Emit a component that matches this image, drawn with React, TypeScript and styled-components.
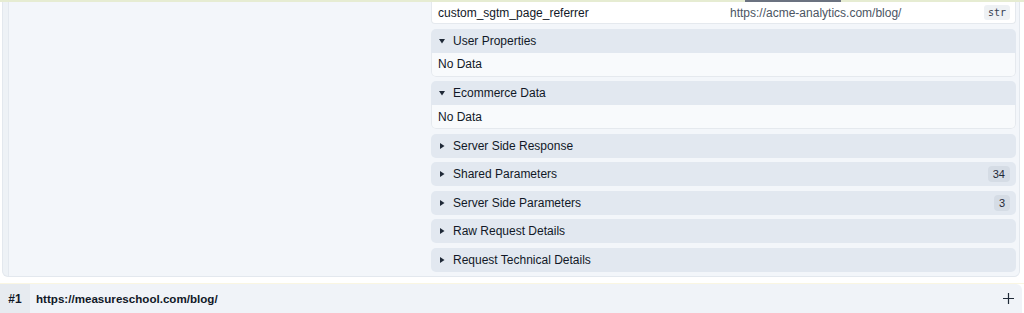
import { FC } from "react";
import styled, { createGlobalStyle } from "styled-components";

const GlobalStyle = createGlobalStyle`
  html, body {
    margin: 0;
    padding: 0;
    background: #ffffff;
    font-family: "Liberation Sans", Arial, Helvetica, sans-serif;
    font-size: 12px;
    color: #1f2937;
  }
`;

const Page = styled.div`
  width: 1024px;
  height: 313px;
  overflow: hidden;
  display: flex;
  flex-direction: column;
`;

const TopLine = styled.div`
  position: relative;
  height: 2px;
  background: #e6ecd2;
  flex-shrink: 0;
`;

const ScrollThumb = styled.div`
  position: absolute;
  left: 745px;
  top: 0;
  width: 96px;
  height: 2px;
  background: #6b7280;
`;

const Panel = styled.div`
  margin: 0 4px 0 2px;
  height: 276px;
  box-sizing: border-box;
  border: 1px solid #e3e8ee;
  border-top: none;
  border-radius: 0 0 6px 6px;
  background: #eef2f6;
  display: grid;
  grid-template-columns: 423px 1fr;
  padding-left: 5px;
  overflow: hidden;
`;

const LeftColumn = styled.div`
  background: #f3f6fa;
  border-left: 1px solid #e4e9ef;
`;

const RightColumn = styled.div`
  background: #f3f6fa;
  display: flex;
  flex-direction: column;
  gap: 4.5px;
  padding: 0 3px 0 0;
`;

const ParamRow = styled.div`
  height: 21px;
  background: #ffffff;
  border: 1px solid #e5e9ee;
  border-top: none;
  border-radius: 0 0 4px 4px;
  display: flex;
  align-items: center;
  padding: 0 5px 0 6px;
`;

const ParamName = styled.span`
  width: 292px;
  color: #111827;
`;

const ParamValue = styled.span`
  flex: 1;
  color: #4b5563;
`;

const TypeBadge = styled.span`
  font-family: "DejaVu Sans Mono", "Liberation Mono", monospace;
  font-size: 10px;
  color: #374151;
  background: #eef1f4;
  border-radius: 3px;
  padding: 2px 4px;
`;

const Section = styled.div`
  display: flex;
  flex-direction: column;
  border-radius: 5px;
  overflow: hidden;
`;

const SectionHeader = styled.div`
  height: 24px;
  background: #e2e8f0;
  display: flex;
  align-items: center;
  padding: 0 6px 0 8px;
  gap: 8px;
  color: #111827;
`;

const Arrow = styled.svg`
  width: 6px;
  height: 6px;
  flex-shrink: 0;
`;

const SectionTitle = styled.span`
  flex: 1;
`;

const CountBadge = styled.span`
  background: #d5dce5;
  color: #1f2937;
  font-size: 11px;
  border-radius: 4px;
  padding: 2px 5px;
`;

const SectionBody = styled.div`
  height: 24px;
  box-sizing: border-box;
  background: #f8fafc;
  border: 1px solid #e5e9ee;
  border-top: none;
  border-radius: 0 0 5px 5px;
  display: flex;
  align-items: center;
  padding-left: 6px;
  color: #111827;
`;

const Divider = styled.div`
  height: 6px;
  border-bottom: 1px solid #faf6e2;
  flex-shrink: 0;
`;

const BottomBar = styled.div`
  height: 29px;
  background: #f0f3f8;
  border-radius: 0 6px 0 0;
  margin-right: 2px;
  display: flex;
  align-items: center;
`;

const IndexCell = styled.div`
  width: 30px;
  height: 100%;
  background: #e7ebf0;
  display: flex;
  align-items: center;
  justify-content: center;
  font-weight: 700;
  color: #111827;
`;

const UrlText = styled.span`
  flex: 1;
  padding-left: 6px;
  font-size: 11.6px;
  font-weight: 700;
  color: #111827;
`;

const AddButton = styled.button`
  border: none;
  background: transparent;
  padding: 0;
  margin-right: 8px;
  display: flex;
  align-items: center;
  cursor: pointer;
`;

type SectionData = {
  title: string;
  open?: boolean;
  count?: number;
};

const sections: SectionData[] = [
  { title: "User Properties", open: true },
  { title: "Ecommerce Data", open: true },
  { title: "Server Side Response" },
  { title: "Shared Parameters", count: 34 },
  { title: "Server Side Parameters", count: 3 },
  { title: "Raw Request Details" },
  { title: "Request Technical Details" },
];

const Caret: FC<{ open?: boolean }> = ({ open }) => (
  <Arrow viewBox="0 0 6 6">
    {open ? (
      <polygon points="0,1 6,1 3,5.5" fill="#1f2937" />
    ) : (
      <polygon points="1,0 5.5,3 1,6" fill="#1f2937" />
    )}
  </Arrow>
);

const CollapsibleSection: FC<SectionData> = ({ title, open, count }) => (
  <Section>
    <SectionHeader>
      <Caret open={open} />
      <SectionTitle>{title}</SectionTitle>
      {count !== undefined && <CountBadge>{count}</CountBadge>}
    </SectionHeader>
    {open && <SectionBody>No Data</SectionBody>}
  </Section>
);

export default function App() {
  return (
    <Page>
      <GlobalStyle />
      <TopLine>
        <ScrollThumb />
      </TopLine>
      <Panel>
        <LeftColumn />
        <RightColumn>
          <ParamRow>
            <ParamName>custom_sgtm_page_referrer</ParamName>
            <ParamValue>https://acme-analytics.com/blog/</ParamValue>
            <TypeBadge>str</TypeBadge>
          </ParamRow>
          {sections.map((s) => (
            <CollapsibleSection key={s.title} {...s} />
          ))}
        </RightColumn>
      </Panel>
      <Divider />
      <BottomBar>
        <IndexCell>#1</IndexCell>
        <UrlText>https://measureschool.com/blog/</UrlText>
        <AddButton aria-label="Add">
          <svg width="11" height="11" viewBox="0 0 11 11">
            <path d="M5.5 0v11M0 5.5h11" stroke="#1f2937" strokeWidth="1.2" />
          </svg>
        </AddButton>
      </BottomBar>
    </Page>
  );
}
